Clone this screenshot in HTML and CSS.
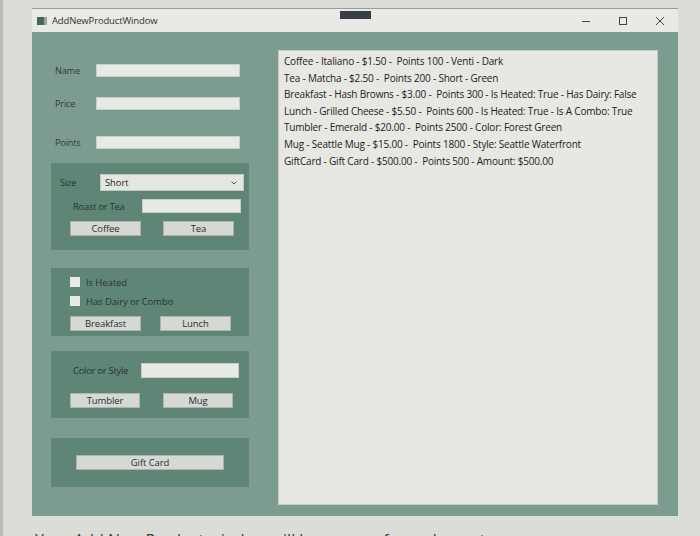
FILE: index.html
```html
<!DOCTYPE html>
<html>
<head>
<meta charset="utf-8">
<link rel="stylesheet" href="styles.css">
</head>
<body>
<div class="screen">
  <div class="window">
    <div class="titlebar">
      <span class="app-icon"><span class="ic-a"></span><span class="ic-b"></span></span>
      <span class="title">AddNewProductWindow</span>
      <span class="tab-mark"></span>
      <span class="controls">
        <span class="ctl min"><svg width="10" height="10" viewBox="0 0 10 10"><path d="M1 5.5H9" stroke="#444" stroke-width="1"/></svg></span>
        <span class="ctl max"><svg width="10" height="10" viewBox="0 0 10 10"><rect x="1.5" y="1.5" width="7" height="7" fill="none" stroke="#444" stroke-width="1"/></svg></span>
        <span class="ctl close"><svg width="10" height="10" viewBox="0 0 10 10"><path d="M1 1L9 9M9 1L1 9" stroke="#444" stroke-width="1"/></svg></span>
      </span>
    </div>
    <div class="client">
      <div class="left">
        <div class="row r1"><span class="lbl">Name</span><span class="tb wide"></span></div>
        <div class="row r2"><span class="lbl">Price</span><span class="tb wide"></span></div>
        <div class="row r3"><span class="lbl">Points</span><span class="tb wide"></span></div>

        <div class="panel p1">
          <div class="prow size-row"><span class="plbl size-lbl">Size</span><span class="combo">Short<svg class="chev" width="6" height="4" viewBox="0 0 6 4"><path d="M0.5 0.5L3 3L5.5 0.5" fill="none" stroke="#555" stroke-width="1"/></svg></span></div>
          <div class="prow roast-row"><span class="plbl roast-lbl">Roast or Tea</span><span class="tb mid"></span></div>
          <div class="btns b1"><span class="btn">Coffee</span><span class="btn">Tea</span></div>
        </div>

        <div class="panel p2">
          <div class="chk c1"><span class="box"></span><span>Is Heated</span></div>
          <div class="chk c2"><span class="box"></span><span>Has Dairy or Combo</span></div>
          <div class="btns b2"><span class="btn">Breakfast</span><span class="btn">Lunch</span></div>
        </div>

        <div class="panel p3">
          <div class="prow color-row"><span class="plbl color-lbl">Color or Style</span><span class="tb mid"></span></div>
          <div class="btns b3"><span class="btn">Tumbler</span><span class="btn">Mug</span></div>
        </div>

        <div class="panel p4">
          <span class="btn gift">Gift Card</span>
        </div>
      </div>
      <div class="listbox">
        <div class="item">Coffee - Italiano - $1.50 -&nbsp; Points 100 - Venti - Dark</div>
        <div class="item">Tea - Matcha - $2.50 -&nbsp; Points 200 - Short - Green</div>
        <div class="item">Breakfast - Hash Browns - $3.00 -&nbsp; Points 300 - Is Heated: True - Has Dairy: False</div>
        <div class="item">Lunch - Grilled Cheese - $5.50 -&nbsp; Points 600 - Is Heated: True - Is A Combo: True</div>
        <div class="item">Tumbler - Emerald - $20.00 -&nbsp; Points 2500 - Color: Forest Green</div>
        <div class="item">Mug - Seattle Mug - $15.00 -&nbsp; Points 1800 - Style: Seattle Waterfront</div>
        <div class="item">GiftCard - Gift Card - $500.00 -&nbsp; Points 500 - Amount: $500.00</div>
      </div>
    </div>
  </div>
  <div class="caption">Your Add New Product window will have more form elements</div>
</div>
</body>
</html>
```
FILE: styles.css
```css
html, body {
  margin: 0;
  padding: 0;
}
body {
  width: 700px;
  height: 536px;
  overflow: hidden;
  background: #dcddd7;
  font-family: "Open Sans", "Noto Sans", sans-serif;
  color: #2a3833;
}
.screen {
  padding: 8px 0 0 29px;
  border-left: 3px solid #b9bbb5;
  height: 536px;
  box-sizing: border-box;
  width: 700px;
}
.window {
  width: 646px;
  background: #e9e9e6;
  border-top: 1px solid #9a9c98;
}
.titlebar {
  height: 23px;
  display: flex;
  align-items: center;
  position: relative;
  padding-left: 5px;
}
.app-icon {
  display: flex;
  width: 10px;
  height: 8px;
  margin-right: 5px;
}
.ic-a { width: 7px; height: 8px; background: #3f6a5d; }
.ic-b { width: 3px; height: 8px; background: #9aa5a1; }
.title {
  font-size: 9.5px;
  color: #2f3331;
  letter-spacing: -0.15px;
}
.tab-mark {
  position: absolute;
  left: 308px;
  top: 2px;
  width: 31px;
  height: 8px;
  background: #383e46;
}
.controls {
  margin-left: auto;
  display: flex;
  align-items: center;
  margin-right: 0;
}
.ctl {
  width: 37px;
  display: flex;
  justify-content: center;
}
.client {
  height: 484px;
  background: #7b9c8f;
  display: flex;
  box-sizing: border-box;
  padding: 18px 20px 11px 19px;
}
.left {
  width: 198px;
  display: flex;
  flex-direction: column;
  padding-top: 13px;
}
.row {
  display: flex;
  align-items: center;
  height: 14px;
  padding-left: 4px;
}
.r2 { margin-top: 19px; }
.r3 { margin-top: 25px; }
.lbl {
  width: 41px;
  font-size: 9.2px;
  letter-spacing: -0.2px;
  color: #2e3e39;
}
.tb {
  display: block;
  height: 13px;
  background: #e8eae6;
  border: 1px solid #c9cdc8;
  box-sizing: border-box;
}
.wide { width: 144px; }
.mid { width: 99px; height: 14px; }
.panel {
  background: #5f8576;
  position: relative;
}
.p1 { margin-top: 14px; height: 87px; }
.p2 { margin-top: 18px; height: 68px; }
.p3 { margin-top: 15px; height: 67px; }
.p4 { margin-top: 20px; height: 49px; }
.prow {
  display: flex;
  align-items: center;
}
.plbl {
  font-size: 9.3px;
  letter-spacing: -0.2px;
  color: #253530;
  white-space: nowrap;
}
.size-row { padding: 11px 0 0 9px; height: 17px; }
.size-lbl { width: 40px; }
.combo {
  width: 144px;
  height: 17px;
  background: #e4e6e2;
  border: 1px solid #c4c8c3;
  box-sizing: border-box;
  font-size: 9.3px;
  color: #222;
  display: flex;
  align-items: center;
  padding-left: 4px;
  position: relative;
}
.chev { position: absolute; right: 6px; top: 6px; }
.roast-row { padding: 8px 0 0 22px; height: 14px; }
.roast-lbl { width: 69px; }
.btns {
  display: flex;
  padding-left: 19px;
}
.b1 { margin-top: 8px; gap: 22px; }
.b2 { margin-top: 10px; gap: 19px; }
.b3 { margin-top: 15px; gap: 23px; }
.btn {
  width: 71px;
  height: 15px;
  background: #d6d8d4;
  border: 1px solid #aeb3ad;
  box-sizing: border-box;
  font-size: 9.5px;
  letter-spacing: -0.1px;
  color: #2a2f2d;
  display: flex;
  align-items: center;
  justify-content: center;
}
.b3 .btn { width: 70px; }
.chk {
  display: flex;
  align-items: center;
  padding-left: 19px;
  font-size: 9.5px;
  letter-spacing: -0.1px;
  color: #283531;
  height: 10px;
}
.c1 { margin-top: 9px; }
.c2 { margin-top: 9px; }
.box {
  width: 10px;
  height: 10px;
  background: #e8eae6;
  margin-right: 6px;
}
.color-row { padding: 12px 0 0 22px; height: 15px; }
.color-lbl { width: 68px; }
.color-row .tb { width: 98px; height: 15px; }
.p4 {
  display: flex;
  align-items: flex-start;
}
.gift {
  width: 148px;
  margin: 17px 0 0 25px;
}
.listbox {
  margin-left: 29px;
  width: 380px;
  height: 455px;
  background: #e7e8e4;
  border: 1px solid #c8ccc7;
  box-sizing: border-box;
  padding: 2px 0 0 5px;
}
.item {
  font-size: 10px;
  line-height: 16.6px;
  color: #1e2120;
  letter-spacing: -0.2px;
  white-space: nowrap;
}
.caption {
  margin-top: 13px;
  font-size: 16px;
  color: #3a3e3c;
  margin-left: 3px;
}
```
